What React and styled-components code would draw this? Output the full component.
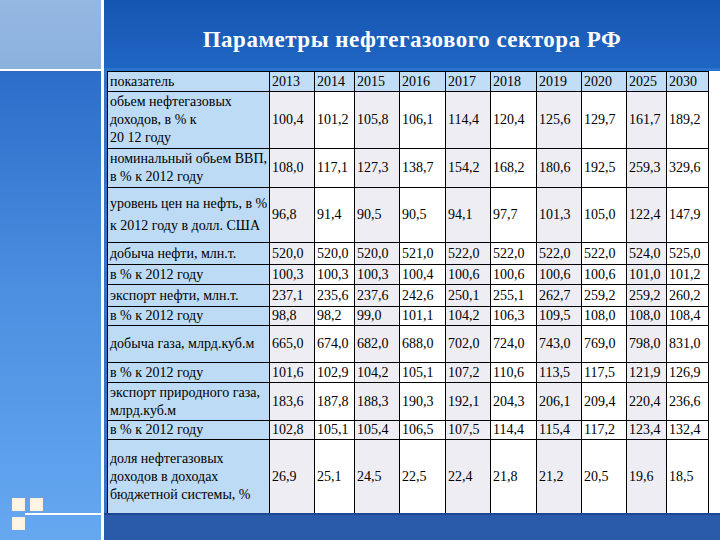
import React from "react";
import styled, { createGlobalStyle } from "styled-components";

const GlobalStyle = createGlobalStyle`
  html, body {
    margin: 0;
    padding: 0;
    background: #ffffff;
  }
  #root {
    width: 720px;
    height: 540px;
    overflow: hidden;
  }
`;

const years = ["2013", "2014", "2015", "2016", "2017", "2018", "2019", "2020", "2025", "2030"];
const colWidths = [45, 40, 45, 46, 45, 46, 45, 45, 40, 42];

const rows = [
  {
    label: ["обьем нефтегазовых", "доходов, в % к", "20 12 году"],
    h: 57,
    values: ["100,4", "101,2", "105,8", "106,1", "114,4", "120,4", "125,6", "129,7", "161,7", "189,2"],
  },
  {
    label: ["номинальный обьем ВВП,", "в % к 2012 году"],
    h: 39,
    values: ["108,0", "117,1", "127,3", "138,7", "154,2", "168,2", "180,6", "192,5", "259,3", "329,6"],
  },
  {
    label: ["уровень цен на нефть, в %", "к 2012 году в долл. США"],
    h: 55,
    tall: true,
    values: ["96,8", "91,4", "90,5", "90,5", "94,1", "97,7", "101,3", "105,0", "122,4", "147,9"],
  },
  {
    label: ["добыча нефти, млн.т."],
    h: 22,
    values: ["520,0", "520,0", "520,0", "521,0", "522,0", "522,0", "522,0", "522,0", "524,0", "525,0"],
  },
  {
    label: ["в % к 2012 году"],
    h: 20,
    values: ["100,3", "100,3", "100,3", "100,4", "100,6", "100,6", "100,6", "100,6", "101,0", "101,2"],
  },
  {
    label: ["экспорт нефти, млн.т."],
    h: 22,
    values: ["237,1", "235,6", "237,6", "242,6", "250,1", "255,1", "262,7", "259,2", "259,2", "260,2"],
  },
  {
    label: ["в % к 2012 году"],
    h: 19,
    values: ["98,8", "98,2", "99,0", "101,1", "104,2", "106,3", "109,5", "108,0", "108,0", "108,4"],
  },
  {
    label: ["добыча газа, млрд.куб.м"],
    h: 37,
    values: ["665,0", "674,0", "682,0", "688,0", "702,0", "724,0", "743,0", "769,0", "798,0", "831,0"],
  },
  {
    label: ["в % к 2012 году"],
    h: 20,
    values: ["101,6", "102,9", "104,2", "105,1", "107,2", "110,6", "113,5", "117,5", "121,9", "126,9"],
  },
  {
    label: ["экспорт природного газа,", "млрд.куб.м"],
    h: 38,
    values: ["183,6", "187,8", "188,3", "190,3", "192,1", "204,3", "206,1", "209,4", "220,4", "236,6"],
  },
  {
    label: ["в % к 2012 году"],
    h: 19,
    values: ["102,8", "105,1", "105,4", "106,5", "107,5", "114,4", "115,4", "117,2", "123,4", "132,4"],
  },
  {
    label: ["доля нефтегазовых", "доходов в доходах", "бюджетной системы, %"],
    h: 74,
    values: ["26,9", "25,1", "24,5", "22,5", "22,4", "21,8", "21,2", "20,5", "19,6", "18,5"],
  },
];

const serif = `"Liberation Serif", "Times New Roman", serif`;

const Slide = styled.div`
  display: grid;
  grid-template-columns: 101px 3px 1fr;
  width: 720px;
  height: 540px;
  font-family: ${serif};
`;

const Sidebar = styled.aside`
  display: flex;
  flex-direction: column;
  height: 540px;
`;

const SidebarTop = styled.div`
  height: 69px;
  background: linear-gradient(180deg, #95b8e2 0%, #8bb1dd 100%);
  border-bottom: 2px solid #ffffff;
`;

const SidebarBody = styled.div`
  flex: 1;
  display: flex;
  flex-direction: column;
  justify-content: flex-end;
  background: linear-gradient(180deg, #2b6dc9 0%, #4a8ee0 45%, #66a8f0 100%);
  padding: 0 0 10px 12px;
`;

const MarkRow = styled.div`
  display: flex;
  align-items: center;
  gap: 5px;
`;

const Square = styled.span`
  width: 13px;
  height: 13px;
  background: #fff5e4;
  box-shadow: inset 0 0 2px #ffe2c2;
`;

const MarkLine = styled.div`
  height: 2px;
  margin: 2px 0 2px 13px;
  background: #ffffff;
`;

const Divider = styled.div`
  background: #ffffff;
`;

const Main = styled.main`
  display: flex;
  flex-direction: column;
  height: 540px;
`;

const Header = styled.header`
  height: 71px;
  flex: none;
  box-sizing: border-box;
  padding-top: 12px;
  display: flex;
  align-items: center;
  justify-content: center;
  background: linear-gradient(180deg, #1656b2 0%, #1f66c2 100%);
  border-bottom: 3px solid #2a74cc;
`;

const Title = styled.h1`
  margin: 0;
  color: #ffffff;
  font-family: ${serif};
  font-weight: bold;
  font-size: 23px;
  letter-spacing: 0.5px;
`;

const Content = styled.div`
  flex: 1;
  min-height: 0;
  display: flex;
  background: #ffffff;
  border-left: 3px solid #3a70c6;
`;

const Table = styled.table`
  border-collapse: collapse;
  table-layout: fixed;
  width: 601px;
  height: 442px;
  font-family: ${serif};
  font-size: 14px;
  line-height: 18px;
  color: #000000;
`;

const Cell = styled.td`
  border: 1px solid #000000;
  padding: 0 0 0 2px;
  vertical-align: middle;
  white-space: nowrap;
  overflow: hidden;
  font-family: ${serif};
  font-size: 14px;
  color: #000000;
  background: ${(p) => (p.$head ? "#c2ddf6" : p.$shade ? "#ededf3" : "#ffffff")};
  line-height: ${(p) => (p.$tall ? "22px" : "18px")};
`;

const LabelCell = styled(Cell)`
  background: #bedbf5;
`;

const Bottom = styled.footer`
  height: 25px;
  flex: none;
  background: #2a5bab;
  border-top: 2px solid #1d4790;
`;

export default function App() {
  return (
    <>
      <GlobalStyle />
      <Slide>
        <Sidebar>
          <SidebarTop />
          <SidebarBody>
            <MarkRow>
              <Square />
              <Square />
            </MarkRow>
            <MarkLine />
            <MarkRow>
              <Square />
            </MarkRow>
          </SidebarBody>
        </Sidebar>
        <Divider />
        <Main>
          <Header>
            <Title>Параметры нефтегазового сектора РФ</Title>
          </Header>
          <Content>
            <Table>
              <colgroup>
                <col style={{ width: 162 }} />
                {colWidths.map((w, i) => (
                  <col key={i} style={{ width: w }} />
                ))}
              </colgroup>
              <tbody>
                <tr style={{ height: 20 }}>
                  <LabelCell>показатель</LabelCell>
                  {years.map((y) => (
                    <Cell key={y} $head>
                      {y}
                    </Cell>
                  ))}
                </tr>
                {rows.map((r, ri) => (
                  <tr key={ri} style={{ height: r.h }}>
                    <LabelCell $tall={r.tall}>
                      {r.label.map((l, li) => (
                        <React.Fragment key={li}>
                          {li > 0 && <br />}
                          {l}
                        </React.Fragment>
                      ))}
                    </LabelCell>
                    {r.values.map((v, vi) => (
                      <Cell key={vi} $shade={vi % 2 === 0}>
                        {v}
                      </Cell>
                    ))}
                  </tr>
                ))}
              </tbody>
            </Table>
          </Content>
          <Bottom />
        </Main>
      </Slide>
    </>
  );
}
